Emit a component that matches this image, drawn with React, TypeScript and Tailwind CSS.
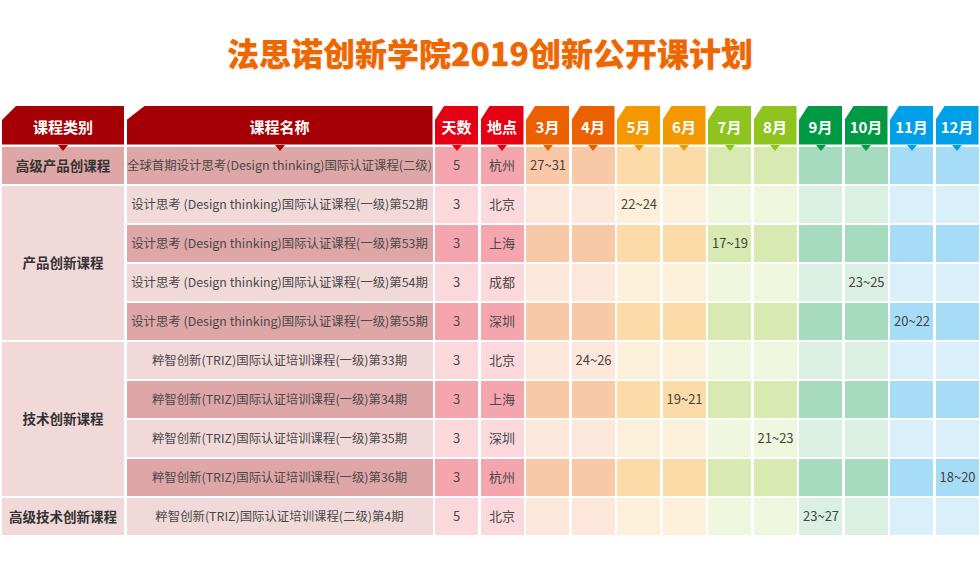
import React from 'react';

type Row = {
  cat?: { name: string; span: number };
  name: string;
  days: number;
  city: string;
  month: number;
  date: string;
};

// colour sets per pair of months: header, darker row, lighter row
const monthTone: Record<number, { head: string; dark: string; light: string }> = {
  3: { head: 'bg-[#eb6100]', dark: 'bg-[#f9c8a7]', light: 'bg-[#fde7da]' },
  4: { head: 'bg-[#eb6100]', dark: 'bg-[#f9c8a7]', light: 'bg-[#fde7da]' },
  5: { head: 'bg-[#f39800]', dark: 'bg-[#fcdba8]', light: 'bg-[#fdf0db]' },
  6: { head: 'bg-[#f39800]', dark: 'bg-[#fcdba8]', light: 'bg-[#fdf0db]' },
  7: { head: 'bg-[#8fc31f]', dark: 'bg-[#d8eab1]', light: 'bg-[#eef6de]' },
  8: { head: 'bg-[#8fc31f]', dark: 'bg-[#d8eab1]', light: 'bg-[#eef6de]' },
  9: { head: 'bg-[#009944]', dark: 'bg-[#a6dbbf]', light: 'bg-[#d9f0e3]' },
  10: { head: 'bg-[#009944]', dark: 'bg-[#a6dbbf]', light: 'bg-[#d9f0e3]' },
  11: { head: 'bg-[#00a0e9]', dark: 'bg-[#a7dcf7]', light: 'bg-[#d9f0fb]' },
  12: { head: 'bg-[#00a0e9]', dark: 'bg-[#a7dcf7]', light: 'bg-[#d9f0fb]' },
};

const triTone: Record<string, string> = {
  'bg-[#a50005]': 'border-t-[#a50005]',
  'bg-[#e60013]': 'border-t-[#e60013]',
  'bg-[#eb6100]': 'border-t-[#eb6100]',
  'bg-[#f39800]': 'border-t-[#f39800]',
  'bg-[#8fc31f]': 'border-t-[#8fc31f]',
  'bg-[#009944]': 'border-t-[#009944]',
  'bg-[#00a0e9]': 'border-t-[#00a0e9]',
};

const months = [3, 4, 5, 6, 7, 8, 9, 10, 11, 12];

const dt = '设计思考 (Design thinking)国际认证课程(一级)';
const triz = '粹智创新(TRIZ)国际认证培训课程(一级)';

const rows: Row[] = [
  { cat: { name: '高级产品创课程', span: 1 }, name: '全球首期设计思考(Design thinking)国际认证课程(二级)', days: 5, city: '杭州', month: 3, date: '27~31' },
  { cat: { name: '产品创新课程', span: 4 }, name: dt + '第52期', days: 3, city: '北京', month: 5, date: '22~24' },
  { name: dt + '第53期', days: 3, city: '上海', month: 7, date: '17~19' },
  { name: dt + '第54期', days: 3, city: '成都', month: 10, date: '23~25' },
  { name: dt + '第55期', days: 3, city: '深圳', month: 11, date: '20~22' },
  { cat: { name: '技术创新课程', span: 4 }, name: triz + '第33期', days: 3, city: '北京', month: 4, date: '24~26' },
  { name: triz + '第34期', days: 3, city: '上海', month: 6, date: '19~21' },
  { name: triz + '第35期', days: 3, city: '深圳', month: 8, date: '21~23' },
  { name: triz + '第36期', days: 3, city: '杭州', month: 12, date: '18~20' },
  { cat: { name: '高级技术创新课程', span: 1 }, name: '粹智创新(TRIZ)国际认证培训课程(二级)第4期', days: 5, city: '北京', month: 9, date: '23~27' },
];

const clipFor: Record<string, string> = {
  wide: '[clip-path:polygon(14px_0,100%_0,100%_100%,0_100%,0_14px)]',
  wider: '[clip-path:polygon(18px_0,100%_0,100%_100%,0_100%,0_14px)]',
  narrow: '[clip-path:polygon(9px_0,100%_0,100%_100%,0_100%,0_14px)]',
};

const HeadCell = ({ label, tone, cut }: { label: string; tone: string; cut: 'wide' | 'wider' | 'narrow' }) => (
  <div className="relative">
    <div
      className={`${tone} ${clipFor[cut]} h-full flex items-center justify-center pt-[3px] text-white font-bold text-[15px]`}
    >
      {label}
    </div>
    <div
      className={`absolute left-1/2 -translate-x-1/2 top-full w-0 h-0 border-x-[5px] border-x-transparent border-t-[6px] ${triTone[tone]} z-10`}
    />
  </div>
);

export default function App() {
  return (
    <div className="w-[980px] h-[562px] bg-white font-['Noto_Sans_CJK_SC','Noto_Sans',sans-serif] text-[#4a4a4a]">
      <h1 className="pt-[33px] text-center text-[32px] leading-[38px] font-black text-[#ec6700] [text-shadow:0_0_1px_#fff,0_1px_2px_rgba(180,80,0,0.25)]">
        法思诺创新学院2019创新公开课计划
      </h1>

      <div className="mt-[35px] ml-[2px] grid grid-cols-[122px_306px_43px_43px_repeat(10,43px)] grid-rows-[38.5px] auto-rows-[37px] gap-x-[2.5px] gap-y-[2px]">
        <HeadCell label="课程类别" tone="bg-[#a50005]" cut="wide" />
        <HeadCell label="课程名称" tone="bg-[#a50005]" cut="wider" />
        <HeadCell label="天数" tone="bg-[#e60013]" cut="narrow" />
        <HeadCell label="地点" tone="bg-[#e60013]" cut="narrow" />
        {months.map(m => (
          <HeadCell key={m} label={`${m}月`} tone={monthTone[m].head} cut="narrow" />
        ))}

        {rows.map((r, i) => {
          const dark = i % 2 === 0;
          return (
            <React.Fragment key={i}>
              {r.cat && (
                <div
                  className={`${r.cat.span === 4 ? 'row-span-4' : ''} ${
                    dark ? 'bg-[#dea6a6]' : 'bg-[#f1d9da]'
                  } flex items-center justify-center text-[13.5px] font-bold text-[#333]`}
                >
                  {r.cat.name}
                </div>
              )}
              <div
                className={`${dark ? 'bg-[#dea6a6]' : 'bg-[#f1d9da]'} flex items-center justify-center text-[12.4px] whitespace-nowrap`}
              >
                {r.name}
              </div>
              <div className={`${dark ? 'bg-[#f5a5ad]' : 'bg-[#fbd8dc]'} flex items-center justify-center text-[13px]`}>
                {r.days}
              </div>
              <div className={`${dark ? 'bg-[#f5a5ad]' : 'bg-[#fbd8dc]'} flex items-center justify-center text-[13px]`}>
                {r.city}
              </div>
              {months.map(m => (
                <div
                  key={m}
                  className={`${dark ? monthTone[m].dark : monthTone[m].light} flex items-center pl-[4px] text-[13px] text-[#444] whitespace-nowrap`}
                >
                  {r.month === m ? r.date : ''}
                </div>
              ))}
            </React.Fragment>
          );
        })}
      </div>
    </div>
  );
}
